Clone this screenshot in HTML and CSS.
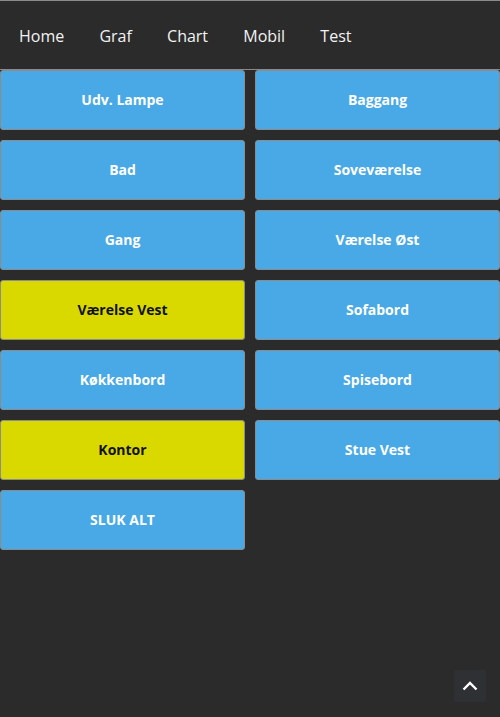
FILE: index.html
```html
<!DOCTYPE html>
<html lang="da">
<head>
<meta charset="utf-8">
<title>Lys</title>
<link rel="stylesheet" href="styles.css">
</head>
<body>
<nav class="nav">
  <a class="nav-item">Home</a>
  <a class="nav-item">Graf</a>
  <a class="nav-item">Chart</a>
  <a class="nav-item">Mobil</a>
  <a class="nav-item">Test</a>
</nav>
<main class="grid">
  <button class="btn">Udv. Lampe</button>
  <button class="btn">Baggang</button>
  <button class="btn">Bad</button>
  <button class="btn">Soveværelse</button>
  <button class="btn">Gang</button>
  <button class="btn">Værelse Øst</button>
  <button class="btn on">Værelse Vest</button>
  <button class="btn">Sofabord</button>
  <button class="btn">Køkkenbord</button>
  <button class="btn">Spisebord</button>
  <button class="btn on">Kontor</button>
  <button class="btn">Stue Vest</button>
  <button class="btn">SLUK ALT</button>
</main>
<a class="to-top" aria-label="Til toppen">
  <svg width="16" height="10" viewBox="0 0 16 10"><path d="M1.5 8.5 L8 2 L14.5 8.5" fill="none" stroke="#fff" stroke-width="2.4"/></svg>
</a>
</body>
</html>
```

FILE: styles.css
```css
html, body {
  margin: 0;
  padding: 0;
  background: #2b2b2b;
  height: 100%;
}
body {
  font-family: "Open Sans", "Noto Sans", sans-serif;
  overflow: hidden;
}
.nav {
  display: flex;
  align-items: center;
  height: 68px;
  border-top: 1px solid #8a8a8a;
  border-bottom: 1px solid #8a8a8a;
  padding-left: 19px;
}
.nav-item {
  color: #f2f2f2;
  font-size: 16px;
  margin-right: 35.2px;
  padding-top: 2px;
}
.grid {
  display: grid;
  grid-template-columns: 245px 245px;
  column-gap: 10px;
  row-gap: 10px;
}
.btn {
  height: 60px;
  background: #48a9e6;
  border: 1px solid #8c8c8c;
  border-radius: 3px;
  color: #fff;
  font-family: "Open Sans", "Noto Sans", sans-serif;
  font-weight: 700;
  font-size: 14px;
  padding: 0 0 2px;
  margin: 0;
}
.btn.on {
  background: #d9d900;
  color: #111;
}
.to-top {
  position: fixed;
  left: 454px;
  top: 670px;
  width: 32px;
  height: 32px;
  background: #2f3034;
  border-radius: 2px;
  display: flex;
  align-items: center;
  justify-content: center;
}
```
